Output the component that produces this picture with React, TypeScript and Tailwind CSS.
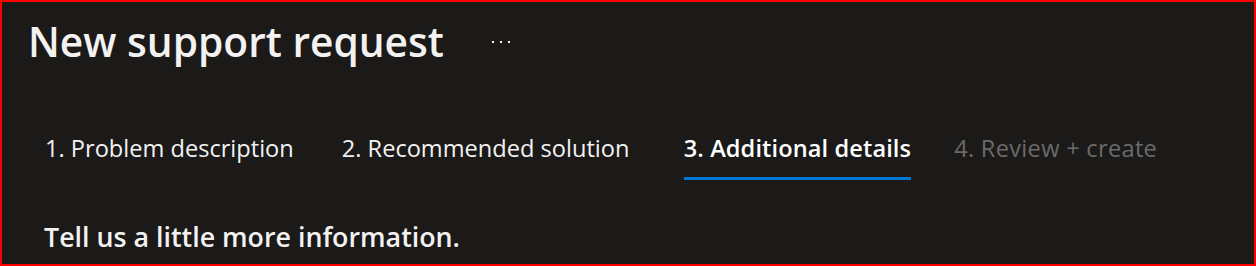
import React from 'react';

const tabs = [
    { label: '1. Problem description', state: 'done', cls: 'mr-[48px]' },
    { label: '2. Recommended solution', state: 'done', cls: 'w-[290px] mr-[52px]' },
    { label: '3. Additional details', state: 'active', cls: 'mr-[43px]' },
    { label: '4. Review + create', state: 'disabled', cls: '' },
];

export default function App() {
    return (
        <div
            className="w-[1256px] h-[266px] bg-[#1b1a19] border-2 border-[#ff0000] overflow-hidden text-[#f3f2f1]"
            style={{ fontFamily: '"Open Sans", "Noto Sans", sans-serif' }}
        >
            <div className="flex items-center pl-[26px] pt-[16px] h-[62px]">
                <h1 className="text-[40.7px] font-semibold leading-none">New support request</h1>
                <svg className="ml-[47px] mt-[2px]" width="20" height="4" viewBox="0 0 20 4" fill="#f3f2f1">
                    <rect x="1" y="1" width="2" height="2" />
                    <rect x="9" y="1" width="2" height="2" />
                    <rect x="17" y="1" width="2" height="2" />
                </svg>
            </div>
            <div className="flex items-end pl-[43px] mt-[69px]">
                {tabs.map((t) => (
                    <div key={t.label} className={`shrink-0 flex flex-col ${t.cls}`}>
                        <span
                            className={`text-[23.6px] leading-[30px] whitespace-nowrap overflow-hidden ${
                                t.state === 'active' ? 'font-semibold text-white tracking-[0.1px]' : t.state === 'disabled' ? 'text-[#6b6a69] tracking-[0.3px]' : 'text-[#f3f2f1]'
                            }`}
                        >
                            {t.label}
                        </span>
                        <div className={`mt-[14px] h-[3px] ${t.state === 'active' ? 'bg-[#0078d4]' : 'bg-transparent'}`} />
                    </div>
                ))}
            </div>
            <div className="pl-[42px] mt-[44px]">
                <h2 className="text-[26.8px] font-semibold leading-none">Tell us a little more information.</h2>
            </div>
        </div>
    );
}
